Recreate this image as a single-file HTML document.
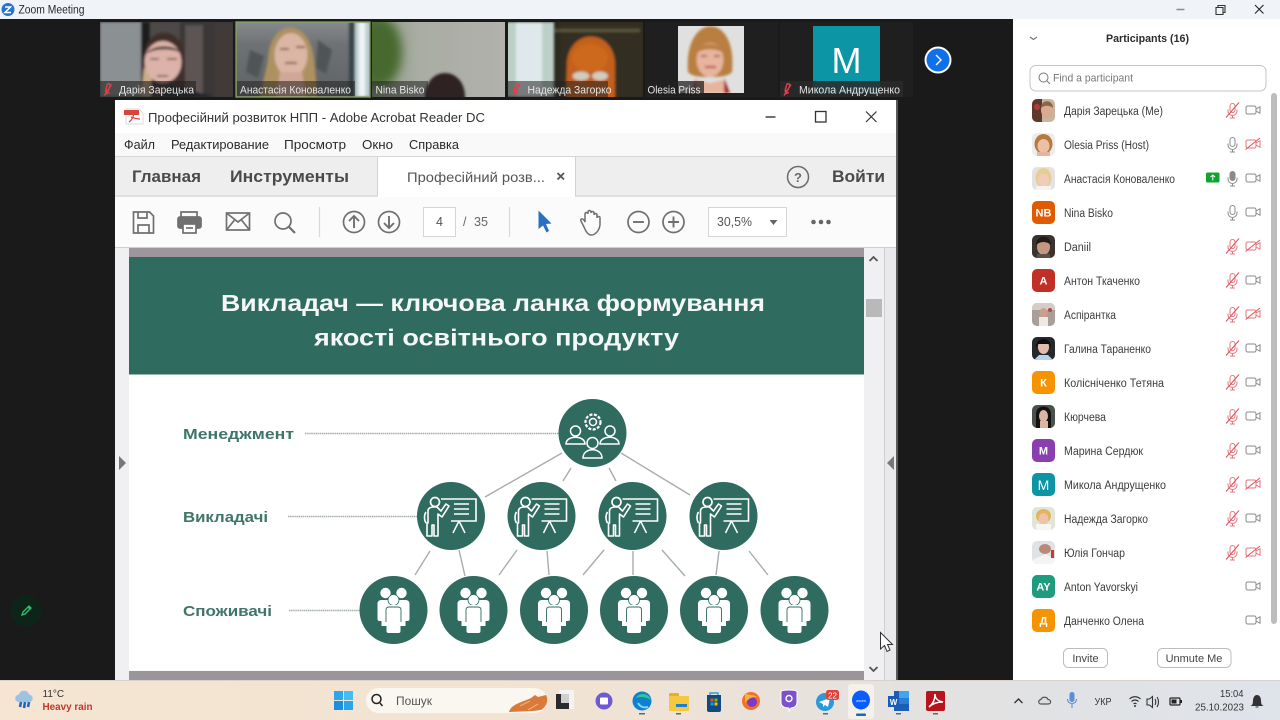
<!DOCTYPE html>
<html><head><meta charset="utf-8"><title>Zoom Meeting</title>
<style>
html,body{margin:0;padding:0;width:1280px;height:720px;overflow:hidden;background:#1a1a1a}
svg{display:block;position:absolute;left:0;top:0;filter:blur(.3px)}
text{font-family:"Liberation Sans","Noto Sans CJK JP",sans-serif}
.n{font-size:11.5px;fill:#3c3c3c}
.t{font-size:11px;fill:#e6e6e6}
.m{font-size:12.5px;fill:#2b2b2b}
.av{font-size:11px;font-weight:bold;fill:#fff;text-anchor:middle}
.lab{font-size:15px;font-weight:bold;fill:#3f7668}
.tb{font-size:17px;font-weight:bold;fill:#4a4a4a}
</style></head><body>
<svg width="1280" height="720" viewBox="0 0 1280 720" xmlns="http://www.w3.org/2000/svg">
<defs>
<linearGradient id="tbar" x1="0" x2="1" y1="0" y2="0"><stop offset="0" stop-color="#f5e5d2"/><stop offset=".45" stop-color="#f1e3d3"/><stop offset=".75" stop-color="#e2e2e2"/><stop offset="1" stop-color="#dfe3ea"/></linearGradient>
<linearGradient id="nina" x1="0" x2="1" y1="0" y2="0"><stop offset="0" stop-color="#8d9a80"/><stop offset=".35" stop-color="#a9ada3"/><stop offset="1" stop-color="#b2b1ac"/></linearGradient>
<linearGradient id="wall" x1="0" x2="0" y1="0" y2="1"><stop offset="0" stop-color="#878a8c"/><stop offset=".3" stop-color="#6f7275"/><stop offset="1" stop-color="#5f6265"/></linearGradient>
<clipPath id="c1"><rect x="100" y="22" width="133" height="75"/></clipPath>
<clipPath id="c2"><rect x="236" y="22" width="134" height="75"/></clipPath>
<clipPath id="c3"><rect x="372" y="22" width="133" height="75"/></clipPath>
<clipPath id="c4"><rect x="508" y="22" width="135" height="75"/></clipPath>
<clipPath id="c5"><rect x="678" y="26" width="66" height="67"/></clipPath>
<clipPath id="a1"><rect x="1032" y="99" width="23" height="23" rx="5"/></clipPath>
<clipPath id="a2"><rect x="1032" y="133" width="23" height="23" rx="5"/></clipPath>
<clipPath id="a3"><rect x="1032" y="167" width="23" height="23" rx="5"/></clipPath>
<clipPath id="a5"><rect x="1032" y="235" width="23" height="23" rx="5"/></clipPath>
<clipPath id="a7"><rect x="1032" y="303" width="23" height="23" rx="5"/></clipPath>
<clipPath id="a8"><rect x="1032" y="337" width="23" height="23" rx="5"/></clipPath>
<clipPath id="a10"><rect x="1032" y="405" width="23" height="23" rx="5"/></clipPath>
<clipPath id="a13"><rect x="1032" y="507" width="23" height="23" rx="5"/></clipPath>
<clipPath id="a14"><rect x="1032" y="541" width="23" height="23" rx="5"/></clipPath>
<filter id="b1" x="-20%" y="-20%" width="140%" height="140%"><feGaussianBlur stdDeviation="1.4"/></filter>
<filter id="b3" x="-50%" y="-50%" width="200%" height="200%"><feGaussianBlur stdDeviation="5"/></filter>

<g id="mic"><rect x="-2.5" y="-6.5" width="5" height="9" rx="2.5" fill="none" stroke="#8a8a8a"/><path d="M-4.5 -.5v1.5a4.5 4.5 0 0 0 9 0v-1.5M0 5.5v2.5M-2.500 8h5" fill="none" stroke="#8a8a8a"/></g>
<g id="micoff"><rect x="-2.5" y="-6.5" width="5" height="9" rx="2.5" fill="none" stroke="#e2777d"/><path d="M-4.5 -.5v1.5a4.5 4.5 0 0 0 9 0v-1.5M0 5.5v2.5M-2.500 8h5" fill="none" stroke="#e2777d"/><path d="M-6.5 7.500L6.5 -7.500" stroke="#e2555f" stroke-width="1.100"/></g>
<g id="cam"><rect x="-7" y="-4" width="10" height="8" rx="1.600" fill="none" stroke="#8a8a8a"/><path d="M3 -1l4 -2.300v6.600l-4 -2.300" fill="none" stroke="#8a8a8a"/></g>
<g id="camoff"><rect x="-7" y="-4" width="10" height="8" rx="1.600" fill="none" stroke="#e2777d"/><path d="M3 -1l4 -2.300v6.600l-4 -2.300" fill="none" stroke="#e2777d"/><path d="M-7.500 5.500L7 -6" stroke="#e2555f" stroke-width="1.100"/></g>
<g id="tmic"><path d="M-1 -5.500c2 -.8 3 .2 2.600 2l-2.200 5-2.200 -1zM-4 6l7 -11M-3 1l1 3 3 -1" fill="none" stroke="#e0404a" stroke-width="1.400"/></g>

<g id="teacher">
<circle r="34" fill="#2f6b5f"/>
<path d="M-10 -17h35v22h-25" fill="none" stroke="#fff" stroke-width="1.600"/>
<path d="M3 -12h15M3 -7h15M3 -2h15" fill="none" stroke="#fff" stroke-width="1.500"/>
<path d="M8 5l-6 12M8 5l6 12" fill="none" stroke="#fff" stroke-width="1.500"/>
<circle cx="-16" cy="-14" r="4.500" fill="none" stroke="#fff" stroke-width="1.700"/>
<path d="M-23 7v-12c0-3 3-4 6-4h3l4 4 5-7 3 2-7 11-4-3v22h-4v-11h-2v11h-5v-13zM-25 -4c-2 3-2 8 0 11" fill="none" stroke="#fff" stroke-width="1.600" stroke-linejoin="round"/>
</g>
<g id="crowd">
<circle r="34" fill="#2f6b5f"/>
<circle cx="-8" cy="-17" r="5.200" fill="#fff"/><circle cx="8" cy="-17" r="5.200" fill="#fff"/>
<path d="M-16 -6q0-4 4-4h24q4 0 4 4v15q0 2-2 2h-2v5h-24v-5h-2q-2 0-2-2z" fill="#fff"/>
<circle cy="-10" r="5.500" fill="#fff" stroke="#2f6b5f" stroke-width=".8"/>
<path d="M-10 -1q0-4 4-4h12q4 0 4 4v13q0 1-1 1h-2v8q0 2-2 2h-10q-2 0-2-2v-8h-2q-1 0-1-1z" fill="#fff"/>
<path d="M-7.500 12v-12q0-3 3-3h9q3 0 3 3v12" fill="none" stroke="#2f6b5f" stroke-width=".9"/>
</g>
</defs>

<!-- zoom window -->
<rect width="1280" height="720" fill="#1a1a1a"/>
<rect width="1280" height="19" fill="#f0f4f9"/>
<circle cx="8" cy="9.500" r="6.500" fill="#2474d6"/>
<path d="M5 7h5.500l-5.500 5.500h6" fill="none" stroke="#fff" stroke-width="1.500"/>
<text x="18.500" y="13.500" font-size="11.500" fill="#2a2a2a" textLength="66" lengthAdjust="spacingAndGlyphs">Zoom Meeting</text>
<path d="M1176.500 9.500h8" stroke="#888" stroke-width="1.500"/>
<path d="M1216 7.500h7v7h-7zM1218 7.500v-2h7v7h-2" fill="none" stroke="#333" stroke-width="1.100"/>
<path d="M1255 5l8.500 8.500M1263.500 5l-8.500 8.500" stroke="#222" stroke-width="1.100"/>

<!-- thumbnails -->
<g clip-path="url(#c1)">
<rect x="100" y="22" width="133" height="75" fill="#3a3736"/>
<g filter="url(#b1)">
<rect x="100" y="22" width="41" height="75" fill="#8b9092"/>
<rect x="141" y="22" width="9" height="75" fill="#1c1b1b"/>
<rect x="150" y="22" width="30" height="75" fill="#4e4946"/>
<rect x="185" y="25" width="18" height="70" fill="#5d5552"/>
<rect x="214" y="22" width="19" height="75" fill="#3f3a39"/>
<path d="M141 97c0-20 1-35 3-42 3-30 37-30 41 0v28l-3 14z" fill="#3f2f2b"/>
<path d="M141 97l3-30 8 10-1 20z" fill="#c9ad86"/>
<ellipse cx="163" cy="62" rx="18.500" ry="21" fill="#dcb2a9"/>
<path d="M146 54c5-9 28-11 35-1-9-5-26-5-35 1z" fill="#4a3731"/>
<path d="M150 59h9M167 59h10M157 76h11" stroke="#6d4a44" stroke-width="1.600"/>
<path d="M170 85l45 12h-55z" fill="#1d232c"/>
</g></g>
<rect x="100" y="81" width="96" height="16" fill="#222" opacity=".62"/>
<g clip-path="url(#c2)">
<rect x="236" y="22" width="134" height="75" fill="url(#wall)"/>
<g filter="url(#b1)">
<path d="M250 50l14 6-6 22-12-6zM318 40l14 10-6 24-10-6z" fill="#4f5457"/>
<rect x="350" y="22" width="20" height="75" fill="#bfd0d4"/>
<rect x="349" y="22" width="6" height="75" fill="#37444a"/>
<rect x="359" y="22" width="6" height="75" fill="#f0f5f6"/>
<path d="M260 97c2-15 6-25 8-38 2-42 42-42 46 0 1 12 3 25 3 38z" fill="#ad9260"/>
<ellipse cx="291" cy="55" rx="16.500" ry="22" fill="#dcb6a4"/>
<path d="M280 49h9M296 47h9M285 63h12" stroke="#7a5146" stroke-width="1.800"/>
<path d="M280 72h22l4 25h-30z" fill="#d0a797"/>
</g></g>
<rect x="236" y="22" width="134" height="75" fill="none" stroke="#84a35c" stroke-width="1.300"/>
<rect x="237" y="81" width="118" height="15" fill="#222" opacity=".55"/>
<g clip-path="url(#c3)">
<rect x="372" y="22" width="133" height="75" fill="url(#nina)"/>
<ellipse cx="378" cy="52" rx="24" ry="36" fill="#47692f" filter="url(#b3)"/>
<path d="M425 100c-2-36 42-36 40 0z" fill="#2d2321" filter="url(#b1)"/>
</g>
<rect x="372" y="81" width="56" height="16" fill="#222" opacity=".55"/>
<g clip-path="url(#c4)">
<rect x="508" y="22" width="135" height="75" fill="#2a2a1f"/>
<g filter="url(#b1)">
<rect x="560" y="22" width="83" height="75" fill="#332f21"/>
<rect x="506" y="22" width="48" height="75" fill="#bcd0c8"/>
<rect x="516" y="22" width="26" height="75" fill="#dfe8ea"/>
<rect x="555" y="29" width="85" height="3" fill="#5a563e"/>
<path d="M566 100l1-38c3-34 45-34 48 0v38z" fill="#c2601f"/>
<ellipse cx="590" cy="58" rx="18" ry="14" fill="#d2701f" opacity=".6"/>
<ellipse cx="581" cy="76" rx="8.500" ry="4.500" fill="#cfcdbe"/>
<ellipse cx="600" cy="76" rx="8" ry="4.500" fill="#cfcdbe"/>
</g></g>
<rect x="508" y="81" width="100" height="16" fill="#222" opacity=".55"/>
<rect x="645" y="22" width="133" height="75" fill="#1f1f1f"/>
<g clip-path="url(#c5)">
<rect x="678" y="26" width="66" height="67" fill="#e0e0e0"/>
<g filter="url(#b1)">
<path d="M688 72c-5-60 50-62 44 0-4 4-10 5-22 5-13 0-18-1-22-5z" fill="#b97f3f"/>
<ellipse cx="710" cy="60" rx="13.500" ry="17" fill="#e7b49e"/>
<path d="M696 53c4-10 20-14 28 0-8-5-20-5-28 0z" fill="#b97f3f"/>
<path d="M701 56h6M714 56h6" stroke="#5d3b30" stroke-width="1.300"/>
<path d="M705 67h11" stroke="#b8403e" stroke-width="2"/>
<path d="M688 93l9-13 13 3 13-3 8 13z" fill="#e7b49e"/>
<path d="M724 78l6 15h-6zM696 78l-4 15h4z" fill="#a32929"/>
</g></g>
<rect x="645" y="81" width="59" height="16" fill="#222" opacity=".75"/>
<rect x="780" y="22" width="133" height="75" fill="#1f1f1f"/>
<rect x="813" y="26" width="67" height="67" fill="#0b95a5"/>
<text x="846.500" y="73" font-size="36" fill="#fff" text-anchor="middle">M</text>
<rect x="780" y="81" width="123" height="16" fill="#2a2a2a" opacity=".85"/>

<use href="#tmic" x="108.500" y="89.500"/>
<text class="t" x="119" y="93.500" textLength="75" lengthAdjust="spacingAndGlyphs">Дарія Зарецька</text>
<text class="t" x="240" y="93.500" textLength="111" lengthAdjust="spacingAndGlyphs">Анастасія Коноваленко</text>
<text class="t" x="375.500" y="93.500" textLength="49" lengthAdjust="spacingAndGlyphs">Nina Bisko</text>
<use href="#tmic" x="517" y="89.500"/>
<text class="t" x="527.500" y="93.500" textLength="84" lengthAdjust="spacingAndGlyphs">Надежда Загорко</text>
<text class="t" x="647.500" y="93.500" textLength="53" lengthAdjust="spacingAndGlyphs">Olesia Priss</text>
<use href="#tmic" x="788" y="89.500"/>
<text class="t" x="799" y="93.500" textLength="101" lengthAdjust="spacingAndGlyphs">Микола Андрущенко</text>

<circle cx="938" cy="60" r="13.500" fill="#fff"/>
<circle cx="938" cy="60" r="11.500" fill="#0e71eb"/>
<path d="M936 55l5 5-5 5" fill="none" stroke="#fff" stroke-width="1.400"/>

<!-- green annotation -->
<circle cx="26" cy="611" r="15.500" fill="#0d2419"/>
<path d="M22 615l1-3 6-6 2 2-6 6zM28 607l2 2" fill="none" stroke="#34c070" stroke-width="1.300"/>

<!-- acrobat window -->
<rect x="115" y="100" width="783" height="580" fill="#f0eff2"/>
<rect x="896" y="100" width="2" height="580" fill="#5a5a5a"/>
<rect x="115" y="100" width="781" height="33" fill="#fff"/>
<rect x="115" y="133" width="781" height="23" fill="#f9f9f9"/>
<rect x="115" y="156" width="781" height="1" fill="#d6d6d6"/>
<rect x="115" y="157" width="263" height="39" fill="#eeeeee"/>
<rect x="378" y="157" width="197" height="40" fill="#fff"/>
<rect x="575" y="157" width="321" height="39" fill="#eeeeee"/>
<path d="M115 196h263M575 196h321M377.500 157v39M575.500 157v39" stroke="#d2d2d2" fill="none"/>
<rect x="115" y="197" width="781" height="50" fill="#fbfbfb"/>
<rect x="115" y="247" width="781" height="1" fill="#cfcfcf"/>

<path d="M126 109h13l4 4v11h-17z" fill="#fff" stroke="#ccc" stroke-width=".7"/>
<rect x="124" y="110" width="15" height="5" fill="#d9453c"/>
<path d="M129 122c3-2 5-6 5-11M131 117c3 1 6 2 9 2" fill="none" stroke="#d9453c" stroke-width="1.200"/>
<text x="148" y="122" font-size="13" fill="#333" textLength="337" lengthAdjust="spacingAndGlyphs">Професійний розвиток НПП - Adobe Acrobat Reader DC</text>
<path d="M765.500 117h10" stroke="#333" stroke-width="1.400"/>
<rect x="815.500" y="111.500" width="10.500" height="10.500" fill="none" stroke="#333" stroke-width="1.300"/>
<path d="M866 111.500l10.500 10.500M876.500 111.500l-10.500 10.500" stroke="#333" stroke-width="1.200"/>

<text class="m" x="124" y="149" textLength="31" lengthAdjust="spacingAndGlyphs">Файл</text>
<text class="m" x="171" y="149" textLength="98" lengthAdjust="spacingAndGlyphs">Редактирование</text>
<text class="m" x="284" y="149" textLength="62" lengthAdjust="spacingAndGlyphs">Просмотр</text>
<text class="m" x="362" y="149" textLength="31" lengthAdjust="spacingAndGlyphs">Окно</text>
<text class="m" x="409" y="149" textLength="50" lengthAdjust="spacingAndGlyphs">Справка</text>

<text class="tb" x="132" y="182" textLength="69" lengthAdjust="spacingAndGlyphs">Главная</text>
<text class="tb" x="230" y="182" textLength="119" lengthAdjust="spacingAndGlyphs">Инструменты</text>
<text x="407" y="182" font-size="14" fill="#555" textLength="138" lengthAdjust="spacingAndGlyphs">Професійний розв...</text>
<path d="M557.500 173l6.500 6.500M564 173l-6.500 6.500" stroke="#555" stroke-width="1.800"/>
<circle cx="798" cy="177" r="10.500" fill="none" stroke="#6a6a6a" stroke-width="1.500"/>
<text x="798" y="182" font-size="13" font-weight="bold" fill="#6a6a6a" text-anchor="middle">?</text>
<text class="tb" x="832" y="182" textLength="53" lengthAdjust="spacingAndGlyphs">Войти</text>

<!-- toolbar icons -->
<g fill="none" stroke="#707070" stroke-width="1.700">
<path d="M133.500 212h16l4 4v17h-20z"/><path d="M138 212v6h9v-6M138 233v-8h11v8"/>
<path d="M181 217v-5h16v5"/><rect x="178" y="217" width="23" height="11" rx="2" fill="#707070"/><rect x="183" y="224" width="13" height="9" fill="#fff"/><path d="M186 228h7"/>
<rect x="226.500" y="213" width="23" height="17"/><path d="M226.500 213l11.500 9 11.500-9M226.500 230l8-10M249.500 230l-8-10"/>
<circle cx="283" cy="221" r="8"/><path d="M289 227l6 6" stroke-width="2.200"/>
<circle cx="354" cy="222" r="10.500"/><path d="M354 228v-12M349 221l5-5 5 5" stroke-width="1.900"/>
<circle cx="389" cy="222" r="10.500"/><path d="M389 216v12M384 223l5 5 5-5" stroke-width="1.900"/>
<circle cx="638.500" cy="222" r="10.500"/><path d="M633 222h11" stroke-width="1.900"/>
<circle cx="673.500" cy="222" r="10.500"/><path d="M668 222h11M673.500 216.500v11" stroke-width="1.900"/>
<path d="M584 227l-3-6c-1-2 1-3 3-1l1 2v-8c0-2 3-2 3 0v-2c0-2 3-2 3 0v1c0-2 3-2 3 0v2c0-2 3-2 3 0v3c0-2 3-2 3 0v6c0 4-3 11-9 11-3 0-5-3-7-8z" stroke-width="1.500"/>
</g>
<path d="M319.500 207v30M509.500 207v30" stroke="#d8d8d8" stroke-width="1.200"/>
<rect x="423.500" y="207.500" width="32" height="29" fill="#fff" stroke="#d5d5d5"/>
<text x="439.500" y="226" font-size="12.500" fill="#555" text-anchor="middle">4</text>
<text x="463" y="226" font-size="12.500" fill="#666">/</text>
<text x="474" y="226" font-size="12.500" fill="#666" textLength="14" lengthAdjust="spacingAndGlyphs">35</text>
<path d="M538.500 210.500l13 13-5.500.5 3 7-2.500 1.500-3.500-7-4.500 3.500z" fill="#2b6fc2"/>
<rect x="708.500" y="207.500" width="78" height="29" fill="#fff" stroke="#d5d5d5"/>
<text x="717" y="226" font-size="13" fill="#555" textLength="35" lengthAdjust="spacingAndGlyphs">30,5%</text>
<path d="M769.500 220h8l-4 5z" fill="#666"/>
<circle cx="813.500" cy="222" r="2.300" fill="#666"/><circle cx="821" cy="222" r="2.300" fill="#666"/><circle cx="828.500" cy="222" r="2.300" fill="#666"/>

<!-- document -->
<rect x="129" y="248" width="735" height="9" fill="#9d979b"/>
<rect x="129" y="257" width="735" height="117.500" fill="#2f6b5f"/>
<rect x="129" y="374.500" width="735" height="296" fill="#fff"/>
<rect x="129" y="671" width="735" height="9" fill="#9a9598"/>
<text x="221" y="311" font-size="23" font-weight="bold" fill="#f4f7f5" textLength="544" lengthAdjust="spacingAndGlyphs">Викладач — ключова ланка формування</text>
<text x="314" y="345.500" font-size="23" font-weight="bold" fill="#f4f7f5" textLength="365" lengthAdjust="spacingAndGlyphs">якості освітнього продукту</text>
<text class="lab" x="183" y="439" textLength="111" lengthAdjust="spacingAndGlyphs">Менеджмент</text>
<text class="lab" x="183" y="522" textLength="85" lengthAdjust="spacingAndGlyphs">Викладачі</text>
<text class="lab" x="183" y="616" textLength="89" lengthAdjust="spacingAndGlyphs">Споживачі</text>
<g stroke="#a6aeab" stroke-width="1.400" fill="none">
<path d="M305 433.500H559" stroke-dasharray="1.500 .6"/>
<path d="M288 516.500H417" stroke-dasharray="1.500 .6"/>
<path d="M289 610.500H360" stroke-dasharray="1.500 .6"/>
<path d="M562 453L485 497M571 468l-8 13M609 468l7 13M621 453l69 42M430 551l-15 24M459 550l6 26M517 550l-18 25M547 551l2 24M604 550l-21 25M633 551v24M662 550l23 26M719 551l-3 24M749 551l19 24"/>
</g>
<circle cx="592.500" cy="433" r="34" fill="#2f6b5f"/>
<g fill="none" stroke="#fff" stroke-width="1.500">
<circle cx="593" cy="422" r="3.500"/><circle cx="593" cy="422" r="7.500" stroke-width="2.200" stroke-dasharray="3 1.500"/>
<circle cx="575.500" cy="431" r="5"/><path d="M566 444c0-9 19-9 19 0z"/>
<circle cx="610" cy="431" r="5"/><path d="M600 444c0-9 19-9 19 0z"/>
<circle cx="592.500" cy="443" r="5.500"/><path d="M583 458c0-11 19-11 19 0z"/>
</g>
<use href="#teacher" x="451" y="516"/>
<use href="#teacher" x="541.500" y="516"/>
<use href="#teacher" x="632.500" y="516"/>
<use href="#teacher" x="723.500" y="516"/>
<use href="#crowd" x="393.500" y="610"/>
<use href="#crowd" x="473.500" y="610"/>
<use href="#crowd" x="554" y="610"/>
<use href="#crowd" x="634" y="610"/>
<use href="#crowd" x="714" y="610"/>
<use href="#crowd" x="794.500" y="610"/>

<!-- scrollbars -->
<rect x="884" y="248" width="1" height="432" fill="#cfcfd2"/>
<rect x="885" y="248" width="11" height="432" fill="#e9e8eb"/>
<rect x="866" y="299" width="16" height="18" fill="#b9b9b9"/>
<path d="M869.500 261l4-4 4 4M869.500 667l4 4 4-4" fill="none" stroke="#555" stroke-width="1.800"/>
<path d="M894 456v14l-7-7z" fill="#777"/>
<path d="M119 456v14l7-7z" fill="#777"/>
<path d="M880.500 632.500v16.500l4-3.500 2.500 6 3-1.500-2.500-5.500h5z" fill="#fff" stroke="#333" stroke-width="1"/>

<!-- participants panel -->
<rect x="1013" y="19" width="267" height="661" fill="#fff"/>
<path d="M1030 37l3.500 2.500 3.500-2.500" fill="none" stroke="#777" stroke-width="1.200"/>
<text x="1106" y="42" font-size="11" font-weight="bold" fill="#2c2c2c" textLength="83" lengthAdjust="spacingAndGlyphs">Participants (16)</text>
<rect x="1030" y="65.500" width="236" height="25.500" rx="6" fill="#fff" stroke="#c4c4c4"/>
<circle cx="1043.500" cy="77.500" r="4.500" fill="none" stroke="#777"/>
<path d="M1047 81l3 3" stroke="#777"/>
<text x="1053" y="81.500" font-size="11" fill="#777" textLength="80" lengthAdjust="spacingAndGlyphs">Find a participant</text>
<rect x="1271" y="93" width="6" height="531" rx="3" fill="#bdbdbd"/>

<!-- avatars -->
<g clip-path="url(#a1)"><rect x="1032" y="99" width="23" height="23" fill="#c9b49c"/><rect x="1032" y="99" width="10" height="23" fill="#5d3a2c"/><circle cx="1037" cy="107" r="3" fill="#b73a3a"/><ellipse cx="1047" cy="110" rx="6" ry="8" fill="#d8aa90"/><path d="M1041 108c0-9 12-9 12 0-3-3-9-3-12 0z" fill="#8a6546"/></g>
<g clip-path="url(#a2)"><rect x="1032" y="133" width="23" height="23" fill="#ececec"/><ellipse cx="1043.500" cy="144" rx="9" ry="10" fill="#b87a3c"/><ellipse cx="1043.500" cy="146" rx="6" ry="7" fill="#ecbfa7"/><rect x="1037" y="152" width="13" height="5" fill="#e7b49e"/></g>
<g clip-path="url(#a3)"><rect x="1032" y="167" width="23" height="23" fill="#e4e2e0"/><ellipse cx="1043.500" cy="178" rx="8" ry="10" fill="#e6cd93"/><ellipse cx="1043.500" cy="180" rx="5.500" ry="6.500" fill="#f0cdb8"/><rect x="1036" y="186" width="15" height="5" fill="#f4f4f4"/></g>
<rect x="1032" y="201" width="23" height="23" rx="5" fill="#e05a00"/><text class="av" x="1043.500" y="216.500">NB</text>
<g clip-path="url(#a5)"><rect x="1032" y="235" width="23" height="23" fill="#3a3330"/><ellipse cx="1043.500" cy="247" rx="6.500" ry="8" fill="#c6977f"/><path d="M1036 245c0-11 15-11 15 0-4-4-11-4-15 0z" fill="#221a18"/><rect x="1037" y="254" width="13" height="4" fill="#59514d"/></g>
<rect x="1032" y="269" width="23" height="23" rx="5" fill="#c13027"/><text class="av" x="1043.500" y="284.500">А</text>
<g clip-path="url(#a7)"><rect x="1032" y="303" width="23" height="23" fill="#a99f98"/><rect x="1032" y="303" width="23" height="7" fill="#d4cdc8"/><ellipse cx="1043.500" cy="313" rx="4" ry="5" fill="#c9a08d"/><rect x="1039" y="317" width="9" height="9" fill="#efe9e5"/><circle cx="1050" cy="310" r="2" fill="#b24a45"/></g>
<g clip-path="url(#a8)"><rect x="1032" y="337" width="23" height="23" fill="#242a2c"/><ellipse cx="1043.500" cy="347" rx="5.500" ry="7" fill="#e3bcab"/><path d="M1036 348c-1-12 16-12 15 0l-2-4h-11z" fill="#0f0c10"/><path d="M1034 360l5-5h9l5 5z" fill="#b7d2ea"/></g>
<rect x="1032" y="371" width="23" height="23" rx="5" fill="#f59300"/><text class="av" x="1043.500" y="386.500">К</text>
<g clip-path="url(#a10)"><rect x="1032" y="405" width="23" height="23" fill="#49514c"/><path d="M1036 428v-14c0-10 15-10 15 0v14z" fill="#14110f"/><ellipse cx="1043.500" cy="416" rx="4.500" ry="6" fill="#dcb5a2"/><rect x="1040" y="421" width="8" height="7" fill="#dcb5a2"/></g>
<rect x="1032" y="439" width="23" height="23" rx="5" fill="#8a3fae"/><text class="av" x="1043.500" y="454.500">М</text>
<rect x="1032" y="473" width="23" height="23" rx="5" fill="#0b95a5"/><text x="1043.500" y="490" font-size="14" fill="#fff" text-anchor="middle">М</text>
<g clip-path="url(#a13)"><rect x="1032" y="507" width="23" height="23" fill="#dfe6d8"/><ellipse cx="1043.500" cy="516" rx="7.500" ry="7" fill="#e5b458"/><ellipse cx="1043.500" cy="519" rx="5" ry="6" fill="#ecc3ad"/><rect x="1036" y="524" width="15" height="6" fill="#f6f6f4"/></g>
<g clip-path="url(#a14)"><rect x="1032" y="541" width="23" height="23" fill="#dfe3e6"/><ellipse cx="1045" cy="549" rx="6" ry="5" fill="#b98a78"/><path d="M1032 560l14-6 9 5v5h-23z" fill="#f4f4f4"/><rect x="1051" y="550" width="3" height="8" fill="#c43a3a"/></g>
<rect x="1032" y="575" width="23" height="23" rx="5" fill="#1f9b7d"/><text class="av" x="1043.500" y="590.500">AY</text>
<rect x="1032" y="609" width="23" height="23" rx="5" fill="#f59300"/><text class="av" x="1043.500" y="624.500">Д</text>

<!-- names -->
<text class="n" x="1064" y="115" textLength="99" lengthAdjust="spacingAndGlyphs">Дарія Зарецька (Me)</text>
<text class="n" x="1064" y="149" textLength="85" lengthAdjust="spacingAndGlyphs">Olesia Priss (Host)</text>
<text class="n" x="1064" y="183" textLength="111" lengthAdjust="spacingAndGlyphs">Анастасія Коноваленко</text>
<text class="n" x="1064" y="217" textLength="49" lengthAdjust="spacingAndGlyphs">Nina Bisko</text>
<text class="n" x="1064" y="251" textLength="27" lengthAdjust="spacingAndGlyphs">Daniil</text>
<text class="n" x="1064" y="285" textLength="76" lengthAdjust="spacingAndGlyphs">Антон Ткаченко</text>
<text class="n" x="1064" y="319" textLength="52" lengthAdjust="spacingAndGlyphs">Аспірантка</text>
<text class="n" x="1064" y="353" textLength="87" lengthAdjust="spacingAndGlyphs">Галина Тараненко</text>
<text class="n" x="1064" y="387" textLength="100" lengthAdjust="spacingAndGlyphs">Колісніченко Тетяна</text>
<text class="n" x="1064" y="421" textLength="42" lengthAdjust="spacingAndGlyphs">Кюрчева</text>
<text class="n" x="1064" y="455" textLength="79" lengthAdjust="spacingAndGlyphs">Марина Сердюк</text>
<text class="n" x="1064" y="489" textLength="102" lengthAdjust="spacingAndGlyphs">Микола Андрущенко</text>
<text class="n" x="1064" y="523" textLength="84" lengthAdjust="spacingAndGlyphs">Надежда Загорко</text>
<text class="n" x="1064" y="557" textLength="61" lengthAdjust="spacingAndGlyphs">Юлія Гончар</text>
<text class="n" x="1064" y="591" textLength="74" lengthAdjust="spacingAndGlyphs">Anton Yavorskyi</text>
<text class="n" x="1064" y="625" textLength="80" lengthAdjust="spacingAndGlyphs">Данченко Олена</text>

<!-- status icons -->
<use href="#micoff" x="1232.500" y="110"/><use href="#cam" x="1253" y="110"/>
<use href="#mic" x="1232.500" y="144"/><use href="#camoff" x="1253" y="144"/>
<rect x="1206" y="172.500" width="13.500" height="10" rx="1.500" fill="#10a332"/><path d="M1212.800 175v5.500M1210.500 177l2.300-2 2.300 2" stroke="#fff" fill="none"/>
<rect x="1230" y="171.500" width="5" height="9" rx="2.500" fill="#8a8a8a"/><use href="#mic" x="1232.500" y="178"/><use href="#cam" x="1253" y="178"/>
<use href="#mic" x="1232.500" y="212"/><use href="#cam" x="1253" y="212"/>
<use href="#micoff" x="1232.500" y="246"/><use href="#camoff" x="1253" y="246"/>
<use href="#micoff" x="1232.500" y="280"/><use href="#cam" x="1253" y="280"/>
<use href="#micoff" x="1232.500" y="314"/><use href="#camoff" x="1253" y="314"/>
<use href="#micoff" x="1232.500" y="348"/><use href="#cam" x="1253" y="348"/>
<use href="#micoff" x="1232.500" y="382"/><use href="#cam" x="1253" y="382"/>
<use href="#micoff" x="1232.500" y="416"/><use href="#cam" x="1253" y="416"/>
<use href="#micoff" x="1232.500" y="450"/><use href="#cam" x="1253" y="450"/>
<use href="#micoff" x="1232.500" y="484"/><use href="#camoff" x="1253" y="484"/>
<use href="#micoff" x="1232.500" y="518"/><use href="#cam" x="1253" y="518"/>
<use href="#micoff" x="1232.500" y="552"/><use href="#camoff" x="1253" y="552"/>
<use href="#cam" x="1253" y="586"/>
<use href="#cam" x="1253" y="620"/>

<rect x="1063.500" y="648.500" width="44" height="19" rx="5" fill="#fff" stroke="#bdbdbd"/>
<text x="1085.500" y="662" font-size="11" fill="#444" text-anchor="middle">Invite</text>
<rect x="1157.500" y="648.500" width="73.500" height="19" rx="5" fill="#fff" stroke="#bdbdbd"/>
<text x="1194" y="662" font-size="11" fill="#444" text-anchor="middle">Unmute Me</text>

<!-- taskbar -->
<rect x="0" y="680" width="1280" height="40" fill="url(#tbar)"/>
<rect x="0" y="680" width="1280" height="1" fill="#d8d2cb"/>
<path d="M19 702c-5 0-5-7 0-7.500 1-5 9-5 10 0 5 .5 5 7.500 0 7.500z" fill="#9cc3e6"/>
<path d="M21 702l-1 5M25 702l-1 6M29 702l-1 5" stroke="#1f66c4" stroke-width="2.600"/>
<text x="42.500" y="697" font-size="10" fill="#333">11°C</text>
<text x="42.500" y="710" font-size="10.500" font-weight="bold" fill="#c5352c" textLength="50" lengthAdjust="spacingAndGlyphs">Heavy rain</text>
<rect x="334" y="691" width="9" height="9" fill="#2ea6e8"/><rect x="344" y="691" width="9" height="9" fill="#45bdf2"/><rect x="334" y="701" width="9" height="9" fill="#1f8fdc"/><rect x="344" y="701" width="9" height="9" fill="#2aa6e8"/>
<rect x="366" y="688" width="181" height="25" rx="12.500" fill="#faf6f0"/>
<circle cx="376.500" cy="699" r="4.500" fill="none" stroke="#222" stroke-width="1.500"/><path d="M380 703l2.500 3" stroke="#222" stroke-width="1.500"/>
<text x="396" y="705" font-size="12" fill="#555" textLength="36" lengthAdjust="spacingAndGlyphs">Пошук</text>
<path d="M509 712c2-8 14-10 22-14l4-3 3 2 8-2c3 6 0 12-5 15l-8 1z" fill="#d9793a"/>
<path d="M520 706l10-5M528 710l10-6" stroke="#f0b07a" stroke-width="1.200"/>
<rect x="559" y="690" width="15" height="19" fill="#f3f3f3"/><rect x="556" y="694" width="13" height="15" fill="#2a2a2a"/><rect x="561" y="694" width="8" height="9" fill="#cfcfcf"/>
<circle cx="604" cy="701" r="8.500" fill="#6f5bd0"/><rect x="600" y="697.500" width="8" height="7" rx="1" fill="#fff"/>
<circle cx="642" cy="701" r="9.500" fill="#0f7fd0"/><path d="M636 698c3-6 13-5 15 2-5-3-10-4-15-2z" fill="#35c78a"/><path d="M638 703c2 4 6 5 10 4" stroke="#7fd4f5" stroke-width="2" fill="none"/>
<rect x="669" y="693" width="10" height="5" rx="1" fill="#e6ae2c"/><rect x="669" y="696" width="20" height="15" rx="1" fill="#f5c93f"/><rect x="676" y="704" width="11" height="3" fill="#1a7fd0"/>
<path d="M707 695h14v15a2 2 0 0 1-2 2h-10a2 2 0 0 1-2-2z" fill="#124a80"/><path d="M710 695v-2h8v2" fill="none" stroke="#27a0d8" stroke-width="1.400"/><rect x="710.500" y="698.500" width="3" height="3" fill="#f25022"/><rect x="714.500" y="698.500" width="3" height="3" fill="#7fba00"/><rect x="710.500" y="702.500" width="3" height="3" fill="#00a4ef"/><rect x="714.500" y="702.500" width="3" height="3" fill="#ffb900"/>
<circle cx="751" cy="701" r="9" fill="#f2702a"/><circle cx="752" cy="702" r="5" fill="#7d3ac6"/><path d="M745 693c3 3 9 1 12 4-5 0-8 1-12 6z" fill="#fbb03b"/>
<path d="M781 692c0-1 1-2 8-2s8 1 8 2l0 10c0 4-3 6-6 6l-2 3v-3c-5 0-8-2-8-6z" fill="#7d51c9" stroke="#fff" stroke-width="1"/><circle cx="789" cy="698.500" r="3" fill="none" stroke="#fff" stroke-width="1.400"/>
<circle cx="825" cy="702" r="9" fill="#2a9bd8"/><path d="M819 702l11-4-2 9-3-2-2 2v-3z" fill="#fff"/>
<rect x="826" y="690" width="13" height="10" rx="2.500" fill="#e0413a"/><text x="832.500" y="698.500" font-size="8" fill="#fff" text-anchor="middle">22</text>
<rect x="848" y="684" width="26" height="35" rx="3" fill="#f5f1ea"/>
<ellipse cx="861" cy="700" rx="9" ry="9.500" fill="#0b5cff"/><text x="861" y="702" font-size="4" fill="#fff" text-anchor="middle">zoom</text>
<rect x="856" y="713.500" width="10" height="2.500" rx="1" fill="#0f6cbd"/>
<rect x="894" y="691" width="15" height="20" fill="#1a5fb4"/><rect x="899" y="691" width="10" height="7" fill="#41a5ee"/><rect x="899" y="698" width="10" height="6" fill="#2b7cd3"/><rect x="888" y="696" width="11" height="11" fill="#185abd"/>
<text x="893.500" y="705" font-size="8" font-weight="bold" fill="#fff" text-anchor="middle">W</text>
<rect x="926" y="691" width="19" height="20" rx="2" fill="#b8141c"/>
<path d="M929 707c4-3 6-8 6-13 0 5 3 7 8 8-5 0-10 1-14 5z" fill="none" stroke="#fff" stroke-width="1.500"/>
<g fill="#666"><rect x="639" y="713" width="6" height="1.500"/><rect x="676" y="713" width="5" height="1.500"/><rect x="823" y="713" width="5" height="1.500"/><rect x="896" y="713" width="5" height="1.500"/><rect x="933" y="713" width="5" height="1.500"/></g>

<path d="M1014.500 703l4-4 4 4" fill="none" stroke="#333" stroke-width="1.400"/>
<path d="M1041 704c-3 0-3-4 0-4.500 1-3 6-3 7 0 3 0 4 4.500 0 4.500z" fill="#ddd" stroke="#555" stroke-width="1.200"/>
<rect x="1069.500" y="692" width="5" height="10" rx="2.500" fill="#5a8fd8"/><path d="M1067.500 699c0 6 9 6 9 0M1072 704v4" fill="none" stroke="#5a8fd8" stroke-width="1.100"/>
<text x="1094.500" y="705" font-size="10.500" fill="#333" textLength="17" lengthAdjust="spacingAndGlyphs">УКР</text>
<path d="M1129.500 699c3-3 8-3 11 0M1131.500 701.500c2-2 5-2 7 0M1133.500 704c1-1 2-1 3 0" fill="none" stroke="#333" stroke-width="1.200"/><circle cx="1135" cy="706" r="1" fill="#333"/>
<path d="M1147 699h2.500l3-2.500v11l-3-2.500h-2.500zM1155 699c1 2 1 4 0 6M1157 697c2 3 2 7 0 10" fill="none" stroke="#333" stroke-width="1.100"/>
<rect x="1170" y="698" width="10" height="7" rx="1" fill="none" stroke="#222" stroke-width="1.200"/><rect x="1171.500" y="699.500" width="5" height="4" fill="#222"/><rect x="1180.500" y="700" width="1.500" height="3" fill="#222"/>
<text x="1220" y="697" font-size="10.500" fill="#333" textLength="23.500" lengthAdjust="spacingAndGlyphs">15:04</text>
<text x="1195" y="710.500" font-size="10.500" fill="#333" textLength="49" lengthAdjust="spacingAndGlyphs">25.10.2023</text>
<path d="M1252 705.500c1.500-1 1.500-3 1.500-5 0-3 1.500-5 3.500-5s3.500 2 3.500 5c0 2 0 4 1.500 5zM1255.500 707h3" fill="#333" stroke="#333"/>
</svg>
</body></html>
